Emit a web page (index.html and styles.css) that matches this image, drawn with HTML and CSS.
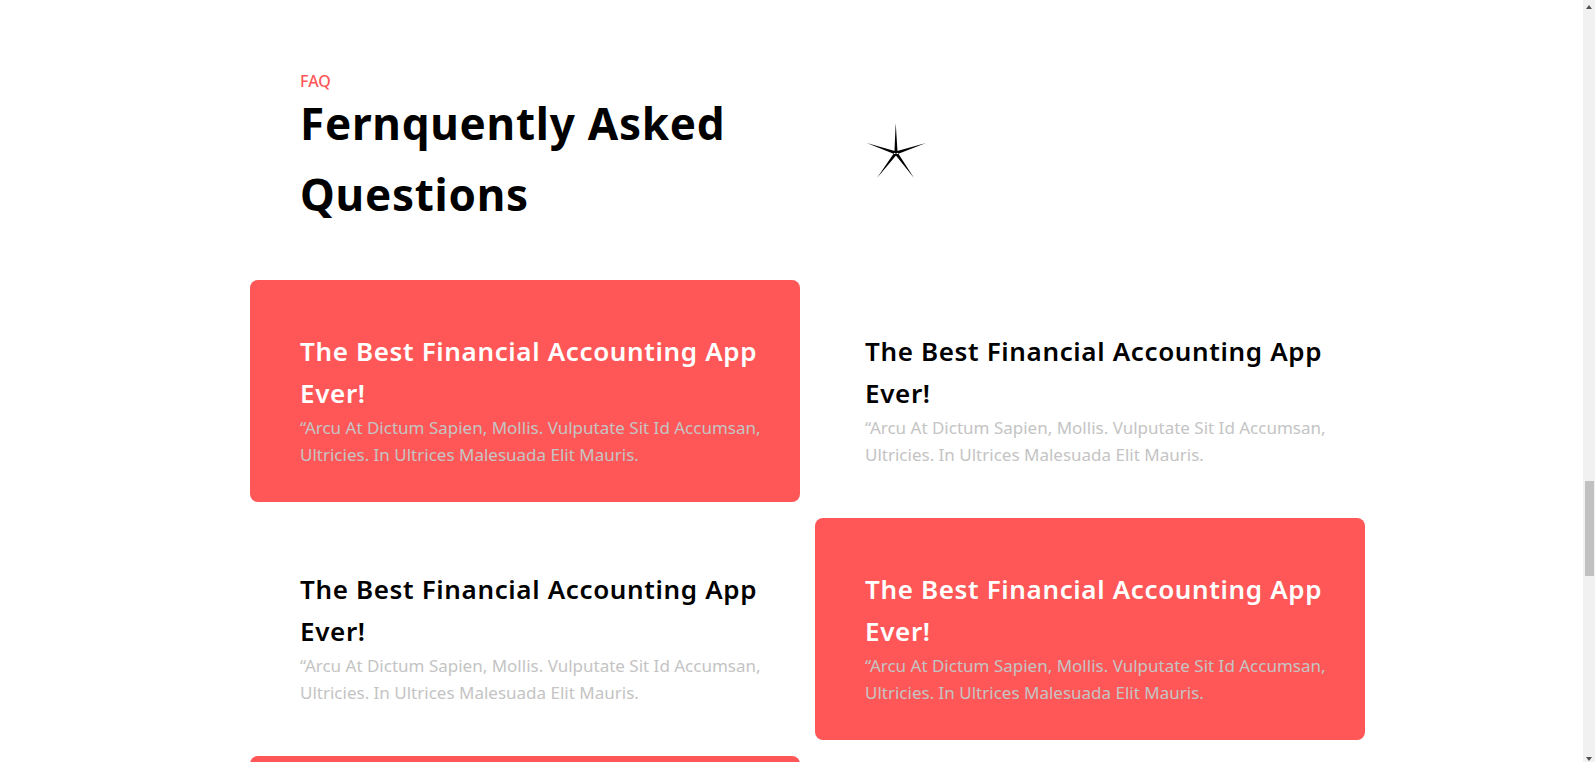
FILE: index.html
```html
<!DOCTYPE html>
<html lang="en">
<head>
<meta charset="utf-8">
<title>FAQ</title>
<link rel="stylesheet" href="styles.css">
</head>
<body>
<main class="page">
  <section class="faq">
    <header class="faq-head">
      <div class="faq-title">
        <p class="eyebrow">FAQ</p>
        <h1 class="title">Fernquently Asked Questions</h1>
      </div>
      <div class="faq-deco">
        <svg class="star" width="62" height="58" viewBox="0 0 62 58" aria-hidden="true">
          <path d="M32.6 31 L30.7 1 L29.4 31 Z M31.52 29.49 L1.7 21 L30.48 32.51 Z M31.51 32.52 L61 21 L30.49 29.48 Z M32.27 31.97 L12 56 L29.73 30.03 Z M32.3 30.07 L49 56 L29.7 31.93 Z" fill="#000"/>
        </svg>
      </div>
    </header>
    <div class="faq-grid">
      <article class="card card-active">
        <h3 class="card-title">The Best Financial Accounting App Ever!</h3>
        <p class="card-text">“Arcu At Dictum Sapien, Mollis. Vulputate Sit Id Accumsan, Ultricies. In Ultrices Malesuada Elit Mauris.</p>
      </article>
      <article class="card">
        <h3 class="card-title">The Best Financial Accounting App Ever!</h3>
        <p class="card-text">“Arcu At Dictum Sapien, Mollis. Vulputate Sit Id Accumsan, Ultricies. In Ultrices Malesuada Elit Mauris.</p>
      </article>
      <article class="card">
        <h3 class="card-title">The Best Financial Accounting App Ever!</h3>
        <p class="card-text">“Arcu At Dictum Sapien, Mollis. Vulputate Sit Id Accumsan, Ultricies. In Ultrices Malesuada Elit Mauris.</p>
      </article>
      <article class="card card-active">
        <h3 class="card-title">The Best Financial Accounting App Ever!</h3>
        <p class="card-text">“Arcu At Dictum Sapien, Mollis. Vulputate Sit Id Accumsan, Ultricies. In Ultrices Malesuada Elit Mauris.</p>
      </article>
      <article class="card card-active">
        <h3 class="card-title">The Best Financial Accounting App Ever!</h3>
        <p class="card-text">“Arcu At Dictum Sapien, Mollis. Vulputate Sit Id Accumsan, Ultricies. In Ultrices Malesuada Elit Mauris.</p>
      </article>
      <article class="card">
        <h3 class="card-title">The Best Financial Accounting App Ever!</h3>
        <p class="card-text">“Arcu At Dictum Sapien, Mollis. Vulputate Sit Id Accumsan, Ultricies. In Ultrices Malesuada Elit Mauris.</p>
      </article>
    </div>
  </section>
</main>
<div class="scrollbar" aria-hidden="true">
  <span class="scroll-arrow scroll-up"></span>
  <span class="scroll-thumb"></span>
  <span class="scroll-arrow scroll-down"></span>
</div>
</body>
</html>
```

FILE: styles.css
```css
* { box-sizing: border-box; }

html, body {
  margin: 0;
  padding: 0;
  height: 100%;
  overflow: hidden;
  background: #fff;
}

body {
  font-family: "Noto Sans", "Open Sans", sans-serif;
  color: #000;
}

.page {
  padding-left: 250px;
}

.faq {
  width: 1115px;
}

.faq-head {
  display: grid;
  grid-template-columns: 550px 550px;
  column-gap: 15px;
  padding-top: 69px;
}

.faq-title {
  padding-left: 50px;
}

.eyebrow {
  margin: 0;
  font-size: 16px;
  line-height: 24px;
  font-weight: 500;
  color: #ff5757;
}

.title {
  margin: -5px 0 0;
  font-size: 44px;
  line-height: 71px;
  font-weight: 700;
  letter-spacing: 0.75px;
  max-width: 470px;
}

.faq-deco {
  padding-left: 50px;
  padding-top: 53px;
}

.star {
  display: block;
}

.faq-grid {
  display: grid;
  grid-template-columns: 550px 550px;
  column-gap: 15px;
  row-gap: 16px;
  margin-top: 50px;
}

.card {
  height: 222px;
  padding: 50px 28px 0 50px;
  border-radius: 8px;
  background: #fff;
}

.card-active {
  background: #ff5757;
}

.card-title {
  margin: 0;
  font-size: 26px;
  line-height: 42px;
  font-weight: 600;
  letter-spacing: 0.65px;
  color: #000;
}

.card-active .card-title {
  color: #fff;
}

.card-text {
  margin: 0;
  font-size: 17px;
  line-height: 27px;
  font-weight: 400;
  color: #c4c4c4;
}

.scrollbar {
  position: fixed;
  top: 0;
  right: 0;
  width: 12px;
  height: 100%;
  background: #f1f1f1;
}

.scroll-thumb {
  position: absolute;
  top: 481px;
  left: 2px;
  right: 1px;
  height: 95px;
  background: #c1c1c1;
}

.scroll-arrow {
  position: absolute;
  left: 3px;
  width: 0;
  height: 0;
  border-left: 3.5px solid transparent;
  border-right: 3.5px solid transparent;
}

.scroll-up {
  top: 5px;
  border-bottom: 4px solid #505050;
}

.scroll-down {
  bottom: 1px;
  border-top: 4px solid #505050;
}
```
